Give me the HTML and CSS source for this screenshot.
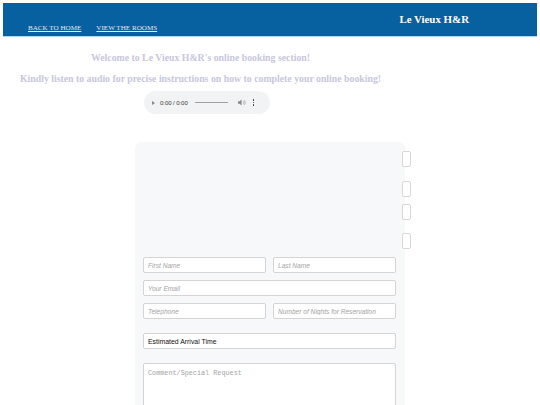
FILE: index.html
```html
<!DOCTYPE html>
<html lang="en">
<head>
<meta charset="utf-8">
<title>Le Vieux H&amp;R - Booking</title>
<link rel="stylesheet" href="styles.css">
</head>
<body>
<header class="topbar">
  <nav class="nav">
    <a href="#" class="nav-link">BACK TO HOME</a>
    <a href="#" class="nav-link">VIEW THE ROOMS</a>
  </nav>
  <div class="brand">Le Vieux H&amp;R</div>
</header>

<section class="intro">
  <p class="intro-line">Welcome to Le Vieux H&amp;R's online booking section!</p>
  <p class="intro-line">Kindly listen to audio for precise instructions on how to complete your online booking!</p>
  <div class="player">
    <span class="play"></span>
    <span class="time">0:00 / 0:00</span>
    <span class="track"></span>
    <svg class="vol" width="8" height="7" viewBox="0 0 8 7"><path d="M0 2.2h1.6L3.6 0.4v6.2L1.6 4.8H0z" fill="#8a8a8a"/><path d="M5 2a1.8 1.8 0 0 1 0 3M6 1a3.2 3.2 0 0 1 0 5" stroke="#a0a0a0" stroke-width="0.7" fill="none"/></svg>
    <span class="kebab"><i></i><i></i><i></i></span>
  </div>
</section>

<section class="card">
  <div class="side-boxes">
    <span class="side-box b1"></span>
    <span class="side-box b2"></span>
    <span class="side-box b3"></span>
    <span class="side-box b4"></span>
  </div>
  <form class="form">
    <div class="row">
      <input class="field" type="text" placeholder="First Name">
      <input class="field" type="text" placeholder="Last Name">
    </div>
    <div class="row">
      <input class="field" type="email" placeholder="Your Email">
    </div>
    <div class="row">
      <input class="field" type="tel" placeholder="Telephone">
      <input class="field" type="text" placeholder="Number of Nights for Reservation">
    </div>
    <div class="row spaced">
      <input class="field filled" type="text" value="Estimated Arrival Time">
    </div>
    <div class="row spaced">
      <textarea class="comment" placeholder="Comment/Special Request"></textarea>
    </div>
  </form>
</section>
</body>
</html>
```
FILE: styles.css
```css
html, body {
  margin: 0;
  padding: 0;
  background: #ffffff;
}
body {
  font-family: "Liberation Serif", "Times New Roman", serif;
  width: 540px;
  overflow: hidden;
}

.topbar {
  margin: 3px 3px 0 3px;
  height: 33px;
  background: #07609f;
  border-bottom: 1px solid #a9dcef;
  display: flex;
  justify-content: space-between;
  align-items: stretch;
  padding: 0 68px 0 25px;
}
.nav {
  display: flex;
  gap: 15px;
  align-items: flex-end;
  padding-bottom: 4px;
}
.nav-link {
  color: #e3e8f2;
  font-size: 7.1px;
  text-decoration: underline;
}
.brand {
  color: #ffffff;
  font-weight: bold;
  font-size: 10.9px;
  align-self: center;
  margin-top: -2px;
}

.intro {
  width: 401px;
  text-align: center;
  padding-top: 15px;
}
.intro-line {
  margin: 0 0 9px 0;
  color: #c7c7dd;
  font-weight: bold;
  font-size: 9.8px;
  line-height: 12px;
}
.player {
  margin: -3px 0 0 144px;
  width: 126px;
  height: 23px;
  border-radius: 12px;
  background: #f1f3f4;
  display: flex;
  align-items: center;
  padding: 0 8px 0 8px;
  box-sizing: border-box;
  font-family: "Liberation Sans", Arial, sans-serif;
}
.play {
  width: 0;
  height: 0;
  border-left: 3.5px solid #8a8a8a;
  border-top: 2.3px solid transparent;
  border-bottom: 2.3px solid transparent;
  margin-right: 5px;
}
.time {
  font-size: 6.1px;
  color: #3c3c3c;
  white-space: nowrap;
  letter-spacing: -0.1px;
}
.track {
  width: 33px;
  height: 1px;
  background: #a0a0a0;
  margin: 0 10px 0 7px;
}
.vol {
  margin-right: 7px;
}
.kebab {
  display: flex;
  flex-direction: column;
  gap: 1px;
}
.kebab i {
  width: 1.6px;
  height: 1.6px;
  background: #333;
  border-radius: 50%;
}

.card {
  position: relative;
  margin: 28px 0 0 135px;
  width: 270px;
  background: #f7f8fa;
  border-radius: 6px 6px 0 0;
  padding: 115px 9px 0 8px;
  box-sizing: border-box;
  height: 270px;
}
.side-boxes {
  position: absolute;
  top: 0;
  right: -6px;
  width: 9px;
}
.side-box {
  position: absolute;
  left: 0;
  width: 9px;
  height: 16px;
  box-sizing: border-box;
  background: #ffffff;
  border: 1px solid #d7d7d7;
  border-radius: 2px;
}
.b1 { top: 9px; }
.b2 { top: 39px; }
.b3 { top: 62px; }
.b4 { top: 91px; }

.form {
  display: flex;
  flex-direction: column;
  gap: 7px;
}
.row {
  display: flex;
  gap: 7px;
}
.row.spaced {
  margin-top: 7px;
}
.field {
  flex: 1;
  min-width: 0;
  height: 16px;
  box-sizing: border-box;
  border: 1px solid #d4d4d4;
  border-radius: 2px;
  background: #ffffff;
  padding: 0 4px 0 4px;
  font-family: "Liberation Sans", Arial, sans-serif;
  font-size: 6.9px;
  color: #111;
  outline: none;
}
.field::placeholder {
  color: #a4a4a4;
  font-style: italic;
  font-size: 6.6px;
}
.comment {
  flex: 1;
  height: 60px;
  box-sizing: border-box;
  border: 1px solid #d4d4d4;
  border-radius: 2px;
  background: #ffffff;
  padding: 5px 4px;
  font-family: "Liberation Mono", "Courier New", monospace;
  font-size: 6.8px;
  resize: none;
  outline: none;
}
.comment::placeholder {
  color: #a4a4a4;
}
```
